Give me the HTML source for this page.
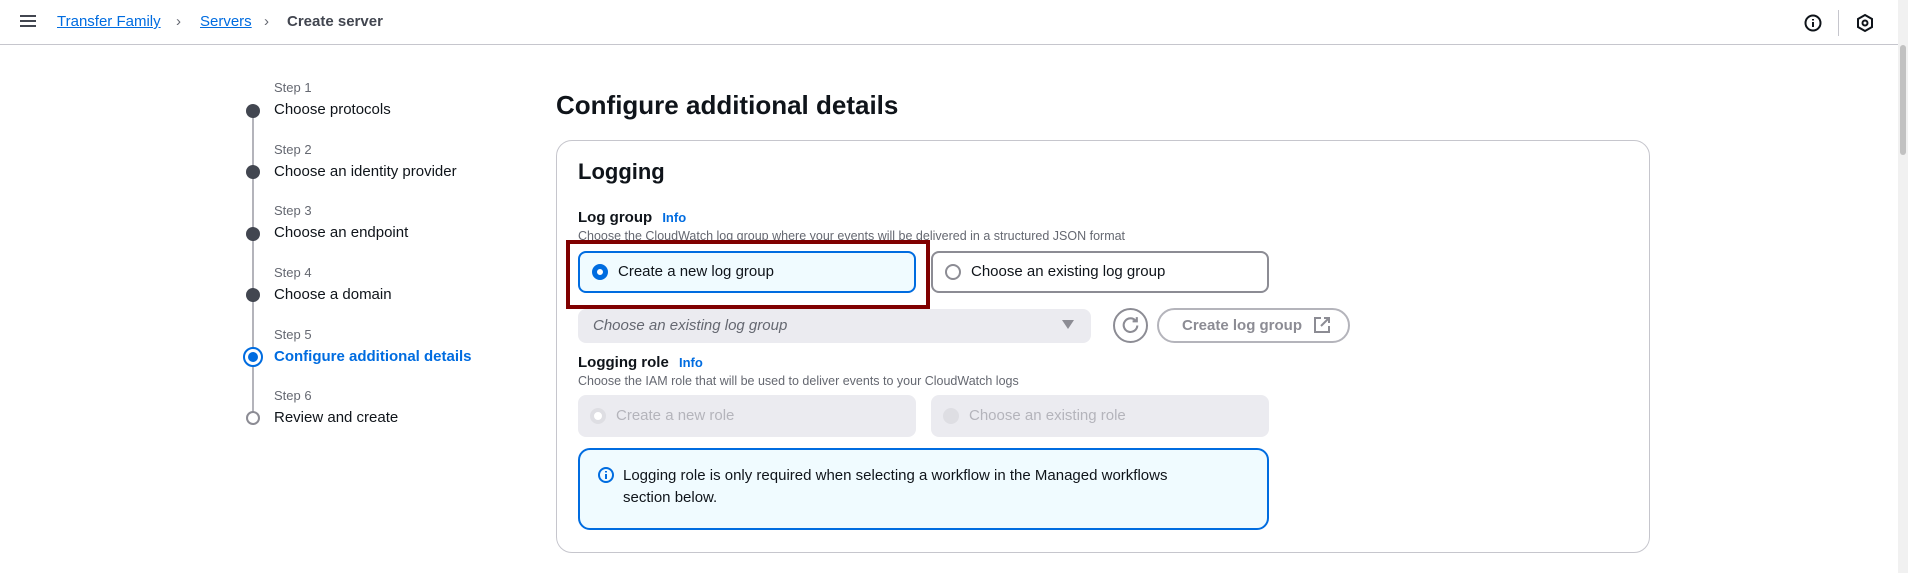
<!DOCTYPE html>
<html><head><meta charset="utf-8"><style>
*{box-sizing:border-box;margin:0;padding:0}
body{width:1908px;height:573px;overflow:hidden;background:#fff;font-family:"Liberation Sans",sans-serif;color:#0f141a;position:relative}
.a{position:absolute;white-space:nowrap}
.hdr{position:absolute;left:0;top:0;width:1898px;height:45px;border-bottom:1px solid #c6c6cd}
.bc{font-size:15px;top:13px}
.lnk{color:#006ce0;text-decoration:underline}
.step{font-size:13px;color:#656871}
.lbl{font-size:15px;color:#0f141a}
.dot{position:absolute;left:246px;width:14px;height:14px;border-radius:50%;background:#424650}
.tile{position:absolute;height:42px;border-radius:8px;font-size:15px;padding-left:38px;line-height:38px}
.rad{position:absolute;left:12px;top:11px;width:16px;height:16px;border-radius:50%}
</style></head><body>
<div class="hdr"></div>
<div class="a" style="left:20px;top:15px;width:16px;height:2px;background:#424650;box-shadow:0 5px 0 #424650,0 10px 0 #424650"></div>
<div class="a bc lnk" style="left:57px">Transfer Family</div>
<div class="a bc" style="left:176px;color:#656871">&#x203A;</div>
<div class="a bc lnk" style="left:200px">Servers</div>
<div class="a bc" style="left:264px;color:#656871">&#x203A;</div>
<div class="a bc" style="left:287px;font-weight:bold;color:#424650">Create server</div>
<svg class="a" style="left:1803px;top:13px" width="20" height="20" viewBox="0 0 20 20"><circle cx="10" cy="10" r="7.5" fill="none" stroke="#0f141a" stroke-width="2"/><path d="M10 9v5M10 6v1.5" stroke="#0f141a" stroke-width="2"/></svg>
<div class="a" style="left:1838px;top:10px;width:1px;height:26px;background:#c6c6cd"></div>
<svg class="a" style="left:1855px;top:13px" width="20" height="20" viewBox="0 0 20 20"><path d="M10 2l7 4v8l-7 4-7-4V6z" fill="none" stroke="#0f141a" stroke-width="2"/><circle cx="10" cy="10" r="2.5" fill="none" stroke="#0f141a" stroke-width="2"/></svg>
<div class="a" style="left:1898px;top:0;width:10px;height:573px;background:#f1f1f1"></div>
<div class="a" style="left:1900px;top:45px;width:6px;height:110px;background:#c1c1c1;border-radius:3px"></div>

<div class="a" style="left:252px;top:118px;width:2px;height:300px;background:#b4b4bb"></div>
<div class="a step" style="left:274px;top:80px">Step 1</div><div class="a lbl" style="left:274px;top:101px">Choose protocols</div><div class="dot" style="top:104px"></div>
<div class="a step" style="left:274px;top:142px">Step 2</div><div class="a lbl" style="left:274px;top:163px">Choose an identity provider</div><div class="dot" style="top:165px"></div>
<div class="a step" style="left:274px;top:203px">Step 3</div><div class="a lbl" style="left:274px;top:224px">Choose an endpoint</div><div class="dot" style="top:227px"></div>
<div class="a step" style="left:274px;top:265px">Step 4</div><div class="a lbl" style="left:274px;top:286px">Choose a domain</div><div class="dot" style="top:288px"></div>
<div class="a step" style="left:274px;top:327px">Step 5</div><div class="a lbl" style="left:274px;top:348px;color:#006ce0;font-weight:bold">Configure additional details</div>
<div class="a" style="left:243px;top:347px;width:20px;height:20px;border-radius:50%;border:2px solid #006ce0;background:#fff"></div><div class="a" style="left:248px;top:352px;width:10px;height:10px;border-radius:50%;background:#006ce0"></div>
<div class="a step" style="left:274px;top:388px">Step 6</div><div class="a lbl" style="left:274px;top:409px">Review and create</div>
<div class="a" style="left:246px;top:411px;width:14px;height:14px;border-radius:50%;border:2px solid #8c8c94;background:#fff"></div>

<div class="a" style="left:556px;top:90px;font-size:26px;font-weight:bold">Configure additional details</div>
<div class="a" style="left:556px;top:140px;width:1094px;height:413px;border:1px solid #c6c6cd;border-radius:16px"></div>
<div class="a" style="left:578px;top:159px;font-size:22px;font-weight:bold">Logging</div>
<div class="a" style="left:578px;top:209px;font-size:15px;font-weight:bold">Log group <span style="color:#006ce0;font-size:13px;margin-left:6px">Info</span></div>
<div class="a" style="left:578px;top:229px;font-size:12.5px;color:#656871">Choose the CloudWatch log group where your events will be delivered in a structured JSON format</div>
<div class="tile" style="left:578px;top:251px;width:338px;border:2px solid #006ce0;background:#f0fbff"><div class="rad" style="border:5px solid #006ce0;background:#fff"></div>Create a new log group</div>
<div class="tile" style="left:931px;top:251px;width:338px;border:2px solid #8c8c94;background:#fff"><div class="rad" style="border:2px solid #8c8c94"></div>Choose an existing log group</div>
<div class="a" style="left:566px;top:240px;width:364px;height:69px;border:4px solid #800000"></div>
<div class="a" style="left:578px;top:309px;width:513px;height:34px;background:#ebebf0;border-radius:8px;font-size:15px;font-style:italic;color:#656871;padding:8px 15px">Choose an existing log group</div>
<div class="a" style="left:1062px;top:320px;width:0;height:0;border-left:6px solid transparent;border-right:6px solid transparent;border-top:9px solid #8c8c94"></div>
<div class="a" style="left:1113px;top:308px;width:35px;height:35px;border-radius:50%;border:2px solid #8c8c94"></div>
<svg class="a" style="left:1120px;top:315px" width="21" height="21" viewBox="0 0 20 20"><path d="M15 5.5A6.5 6.5 0 1 0 16.5 10" fill="none" stroke="#8c8c94" stroke-width="2"/><path d="M16 2v4h-4" fill="none" stroke="#8c8c94" stroke-width="2"/></svg>
<div class="a" style="left:1157px;top:308px;width:193px;height:35px;border-radius:18px;border:2px solid #b4b4bb;font-size:15px;font-weight:bold;color:#8c8c94;padding:7px 0 0 23px">Create log group</div>
<svg class="a" style="left:1313px;top:316px" width="18" height="18" viewBox="0 0 18 18"><path d="M8 2H2v14h14v-6M11 2h5v5M16 2l-8 8" fill="none" stroke="#8c8c94" stroke-width="2"/></svg>
<div class="a" style="left:578px;top:354px;font-size:15px;font-weight:bold">Logging role <span style="color:#006ce0;font-size:13px;margin-left:6px">Info</span></div>
<div class="a" style="left:578px;top:374px;font-size:12.5px;color:#656871">Choose the IAM role that will be used to deliver events to your CloudWatch logs</div>
<div class="tile" style="left:578px;top:395px;width:338px;background:#ebebf0;color:#b4b4bb;line-height:42px"><div class="rad" style="top:13px;border:4px solid #dedee3;background:#fff"></div>Create a new role</div>
<div class="tile" style="left:931px;top:395px;width:338px;background:#ebebf0;color:#b4b4bb;line-height:42px"><div class="rad" style="top:13px;background:#dedee3"></div>Choose an existing role</div>
<div class="a" style="left:578px;top:448px;width:691px;height:82px;border:2px solid #006ce0;border-radius:12px;background:#f0fbff"></div>
<svg class="a" style="left:597px;top:466px" width="18" height="18" viewBox="0 0 18 18"><circle cx="9" cy="9" r="7" fill="none" stroke="#006ce0" stroke-width="2"/><path d="M9 8v5M9 5v1.5" stroke="#006ce0" stroke-width="2"/></svg>
<div class="a" style="left:623px;top:465px;font-size:15px;line-height:22px">Logging role is only required when selecting a workflow in the Managed workflows<br>section below.</div>
</body></html>
